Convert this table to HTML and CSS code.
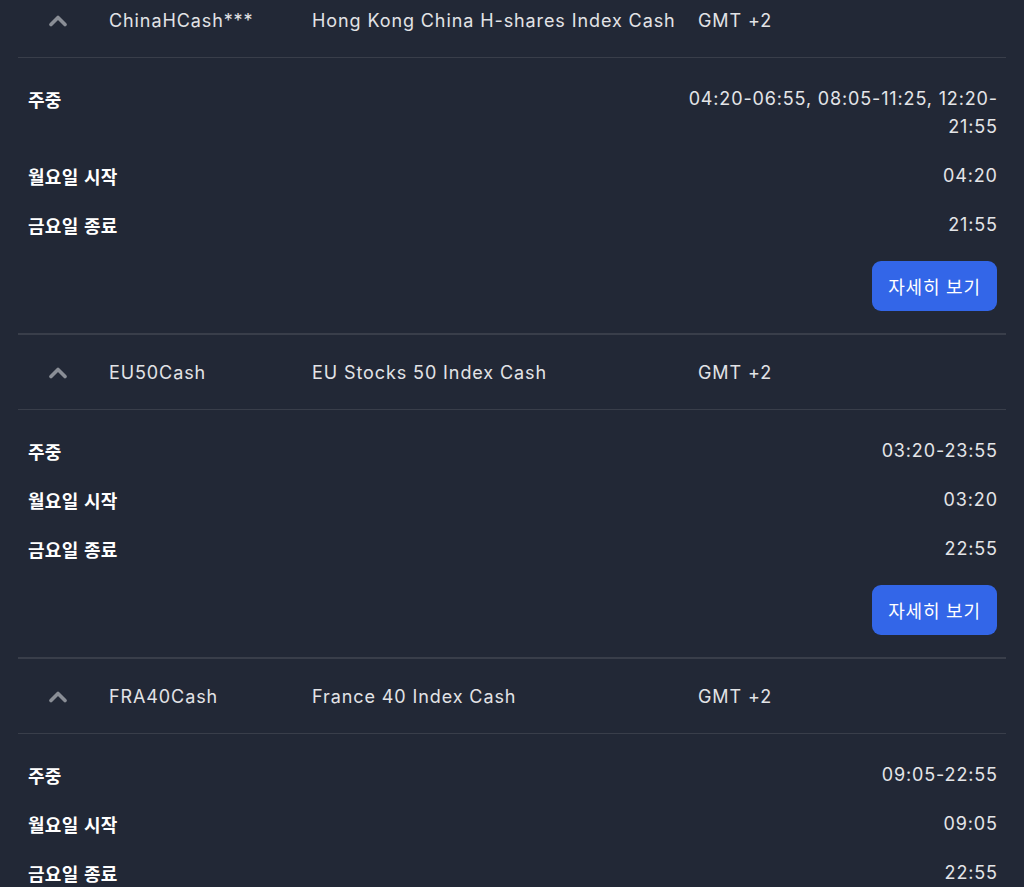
FILE: index.html
```html
<!DOCTYPE html>
<html lang="ko">
<head>
<meta charset="utf-8">
<link rel="stylesheet" href="styles.css">
</head>
<body>
<div class="list">
  <section class="item">
    <div class="head">
      <span class="chev"><svg width="20" height="13" viewBox="0 0 20 13"><path d="M3 10.5 L10 3.5 L17 10.5" fill="none" stroke="#8a8e96" stroke-width="3.6" stroke-linecap="round" stroke-linejoin="round"/></svg></span>
      <span class="sym">ChinaHCash***</span>
      <span class="desc">Hong Kong China H-shares Index Cash</span>
      <span class="tz">GMT +2</span>
    </div>
    <div class="body">
      <div class="row"><span class="label">주중</span><span class="val">04:20-06:55, 08:05-11:25, 12:20-<br>21:55</span></div>
      <div class="row"><span class="label">월요일 시작</span><span class="val">04:20</span></div>
      <div class="row"><span class="label">금요일 종료</span><span class="val">21:55</span></div>
      <div class="actions"><button class="btn">자세히 보기</button></div>
    </div>
  </section>
  <section class="item">
    <div class="head">
      <span class="chev"><svg width="20" height="13" viewBox="0 0 20 13"><path d="M3 10.5 L10 3.5 L17 10.5" fill="none" stroke="#8a8e96" stroke-width="3.6" stroke-linecap="round" stroke-linejoin="round"/></svg></span>
      <span class="sym">EU50Cash</span>
      <span class="desc">EU Stocks 50 Index Cash</span>
      <span class="tz">GMT +2</span>
    </div>
    <div class="body">
      <div class="row"><span class="label">주중</span><span class="val">03:20-23:55</span></div>
      <div class="row"><span class="label">월요일 시작</span><span class="val">03:20</span></div>
      <div class="row"><span class="label">금요일 종료</span><span class="val">22:55</span></div>
      <div class="actions"><button class="btn">자세히 보기</button></div>
    </div>
  </section>
  <section class="item">
    <div class="head">
      <span class="chev"><svg width="20" height="13" viewBox="0 0 20 13"><path d="M3 10.5 L10 3.5 L17 10.5" fill="none" stroke="#8a8e96" stroke-width="3.6" stroke-linecap="round" stroke-linejoin="round"/></svg></span>
      <span class="sym">FRA40Cash</span>
      <span class="desc">France 40 Index Cash</span>
      <span class="tz">GMT +2</span>
    </div>
    <div class="body">
      <div class="row"><span class="label">주중</span><span class="val">09:05-22:55</span></div>
      <div class="row"><span class="label">월요일 시작</span><span class="val">09:05</span></div>
      <div class="row"><span class="label">금요일 종료</span><span class="val">22:55</span></div>
      <div class="actions"><button class="btn">자세히 보기</button></div>
    </div>
  </section>
</div>
</body>
</html>
```

FILE: styles.css
```css
html, body {
  margin: 0;
  padding: 0;
  background: #222836;
  overflow: hidden;
}
body {
  font-family: Inter, "Noto Sans CJK KR", sans-serif;
  color: #e4e5e8;
}
.list {
  margin: -17px 18px 0 18px;
}
.item {
  border-bottom: 2px solid #393e4a;
}
.head {
  display: grid;
  grid-template-columns: 91px 203px 386px 1fr;
  align-items: center;
  height: 74px;
  border-bottom: 1px solid #393e4a;
  font-size: 18px;
  letter-spacing: 0.9px;
  color: #e2e3e6;
}
.chev {
  padding-left: 30px;
  display: flex;
  align-items: center;
}
.chev svg { display: block; }
.body {
  padding: 27px 9px 22px 10px;
  display: flex;
  flex-direction: column;
  gap: 21px;
}
.row {
  display: flex;
  justify-content: space-between;
  align-items: flex-start;
  line-height: 28px;
  font-size: 18px;
}
.label {
  font-family: "Noto Sans CJK KR", sans-serif;
  font-weight: 700;
  letter-spacing: 0.3px;
  color: #ffffff;
}
.val {
  text-align: right;
  letter-spacing: 0.85px;
  margin-right: -0.85px;
  color: #e4e5e8;
}
.actions {
  display: flex;
  justify-content: flex-end;
  margin-top: 1px;
}
.btn {
  width: 125px;
  height: 50px;
  border: none;
  border-radius: 9px;
  background: #3366e8;
  color: #ffffff;
  font-family: "Noto Sans CJK KR", sans-serif;
  font-size: 18px;
  letter-spacing: 0.8px;
  padding: 0;
}
```
